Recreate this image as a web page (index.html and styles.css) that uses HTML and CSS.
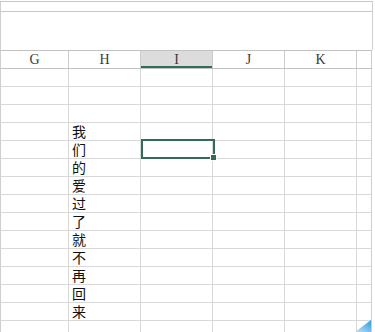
FILE: index.html
```html
<!DOCTYPE html>
<html lang="zh-CN">
<head>
    <meta charset="UTF-8">
    <meta name="viewport" content="width=device-width, initial-scale=1.0">
    <title>Sheet</title>
    <link rel="stylesheet" href="styles.css">
</head>
<body>

<div class="sheet">
    <div class="formula-bar"></div>
    <div class="blank-area"></div>

    <div class="row header">
        <div class="cell col-g">G</div>
        <div class="cell">H</div>
        <div class="cell active">I</div>
        <div class="cell">J</div>
        <div class="cell">K</div>
        <div class="cell col-l"></div>
    </div>

    <div id="rows"></div>

    <div class="selection"><span class="handle"></span></div>

    <svg class="corner" width="20" height="14" viewBox="0 0 20 14">
        <defs>
            <linearGradient id="cg" x1="0" y1="1" x2="1" y2="0">
                <stop offset="0" stop-color="#bfe3f7"/>
                <stop offset="1" stop-color="#2f9be0"/>
            </linearGradient>
        </defs>
        <polygon points="2,14 18,2 18,14" fill="url(#cg)"/>
    </svg>
</div>

<script>
    // text that sits in column H, one character per row
    const text = "我们的爱过了就不再回来";
    const rowsBox = document.getElementById("rows");

    for (let i = 0; i < 15; i++) {
        const row = document.createElement("div");
        row.className = "row";
        const ch = i >= 3 && i - 3 < text.length ? text[i - 3] : "";
        row.innerHTML = `
            <div class="cell col-g"></div>
            <div class="cell text">${ch}</div>
            <div class="cell"></div>
            <div class="cell"></div>
            <div class="cell"></div>
            <div class="cell col-l"></div>
        `;
        rowsBox.appendChild(row);
    }
</script>

</body>
</html>
```

FILE: styles.css
```css
body {
    margin: 0;
    background-color: #ffffff;
    font-family: "Liberation Serif", serif;
}
.sheet {
    position: relative;
    width: 375px;
    height: 332px;
    overflow: hidden;
}
.formula-bar {
    margin-top: 1px;
    height: 9px;
    width: 371px;
    border-top: 1px solid #c8c8c8;
    border-bottom: 1px solid #c8c8c8;
    border-left: 1px solid #cfcfcf;
    border-right: 1px solid #cfcfcf;
}
.blank-area {
    height: 38px;
    width: 371px;
    border-left: 1px solid #cfcfcf;
    border-right: 1px solid #cfcfcf;
}
.row {
    display: flex;
    height: 17px;
    border-bottom: 1px solid #d8d8d8;
    border-left: 1px solid #cfcfcf;
    width: 371px;
}
.header {
    border-top: 1px solid #c2c2c2;
    border-bottom: 1px solid #c2c2c2;
}
.cell {
    width: 71px;
    flex-shrink: 0;
    border-right: 1px solid #d8d8d8;
}
.cell.col-g {
    width: 67px;
}
.cell.col-l {
    width: 14px;
    border-right: 1px solid #cfcfcf;
}
.header .cell {
    text-align: center;
    font-size: 14px;
    line-height: 17px;
    color: #3a3a3a;
    border-right-color: #cdcdcd;
}
.header .cell.active {
    background-color: #dcdcdc;
    box-shadow: inset 0 -2px 0 #2f6f55;
}
.text {
    font-family: "Noto Sans CJK SC", sans-serif;
    font-size: 14px;
    line-height: 17px;
    padding-left: 3px;
    width: 68px;
    color: #111;
}
.selection {
    position: absolute;
    left: 141px;
    top: 139px;
    width: 70px;
    height: 16px;
    border: 2px solid #336b57;
}
.handle {
    position: absolute;
    right: -4px;
    bottom: -4px;
    width: 5px;
    height: 5px;
    background-color: #336b57;
    border: 1px solid #ffffff;
}
.corner {
    position: absolute;
    right: 2px;
    bottom: 0;
}
```
